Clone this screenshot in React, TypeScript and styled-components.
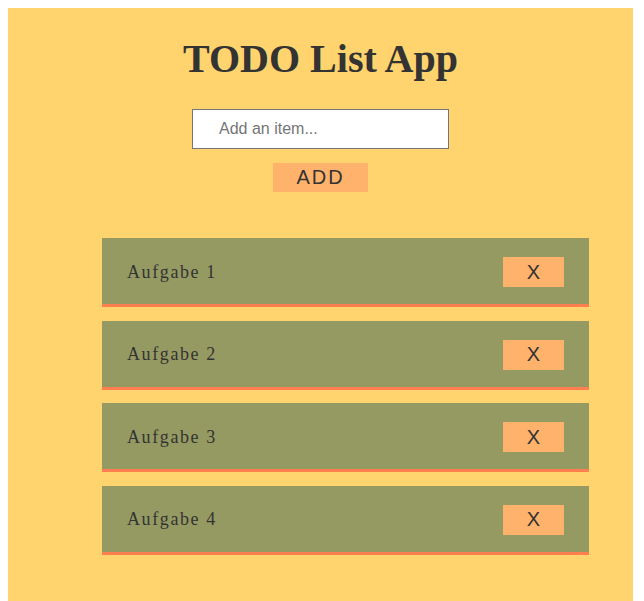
import React, { useState } from "react";
import styled, { createGlobalStyle } from "styled-components";

const Global = createGlobalStyle`
  html, body { margin: 0; padding: 0; overflow: hidden; }
  body { margin: 8px 8px 0; background: #fff; }
`;

const AppBox = styled.div`
  width: 625px;
  height: 593px;
  background: #ffd36d;
  display: flex;
  flex-direction: column;
  align-items: center;
  box-sizing: border-box;
  padding-top: 28px;
`;

const Title = styled.h1`
  margin: 0;
  font-family: "Liberation Serif", "Times New Roman", serif;
  font-weight: bold;
  font-size: 40px;
  line-height: 46px;
  color: #333;
`;

const Input = styled.input`
  margin-top: 27px;
  width: 257px;
  height: 40px;
  box-sizing: border-box;
  border: 1px solid #767676;
  padding: 0 26px;
  font-family: "Liberation Sans", Arial, sans-serif;
  font-size: 16px;
  background: #fff;
  color: #333;
  outline: none;
  &::placeholder { color: #757575; }
`;

const AddButton = styled.button`
  margin-top: 14px;
  width: 95px;
  height: 29px;
  border: none;
  background: #ffb26b;
  color: #333;
  font-family: "Liberation Sans", Arial, sans-serif;
  font-size: 20px;
  letter-spacing: 2px;
  padding: 0;
`;

const List = styled.ul`
  list-style: none;
  margin: 46px 0 0;
  padding: 0 0 0 94px;
  display: flex;
  flex-direction: column;
  gap: 13.67px;
  align-self: stretch;
  box-sizing: border-box;
`;

const Item = styled.li`
  width: 487px;
  height: 69px;
  box-sizing: border-box;
  background: #959a62;
  border-bottom: 3px solid #ff7f50;
  display: flex;
  align-items: center;
  justify-content: space-between;
  padding: 0 25px;
`;

const ItemText = styled.span`
  font-family: "Liberation Serif", "Times New Roman", serif;
  font-size: 18px;
  letter-spacing: 1.6px;
  color: #333;
  margin-top: 2px;
`;

const DeleteButton = styled.button`
  width: 61px;
  height: 30px;
  border: none;
  background: #ffb26b;
  color: #333;
  font-family: "Liberation Sans", Arial, sans-serif;
  font-size: 20px;
  padding: 0;
  margin-top: 2px;
`;

export default function App() {
  const [items, setItems] = useState(["Aufgabe 1", "Aufgabe 2", "Aufgabe 3", "Aufgabe 4"]);
  const [text, setText] = useState("");
  return (
    <>
      <Global />
      <AppBox>
        <Title>TODO List App</Title>
        <Input placeholder="Add an item..." value={text} onChange={(e) => setText(e.target.value)} />
        <AddButton
          onClick={() => {
            if (text.trim()) {
              setItems([...items, text.trim()]);
              setText("");
            }
          }}
        >
          ADD
        </AddButton>
        <List>
          {items.map((it, i) => (
            <Item key={i}>
              <ItemText>{it}</ItemText>
              <DeleteButton onClick={() => setItems(items.filter((_, j) => j !== i))}>X</DeleteButton>
            </Item>
          ))}
        </List>
      </AppBox>
    </>
  );
}
